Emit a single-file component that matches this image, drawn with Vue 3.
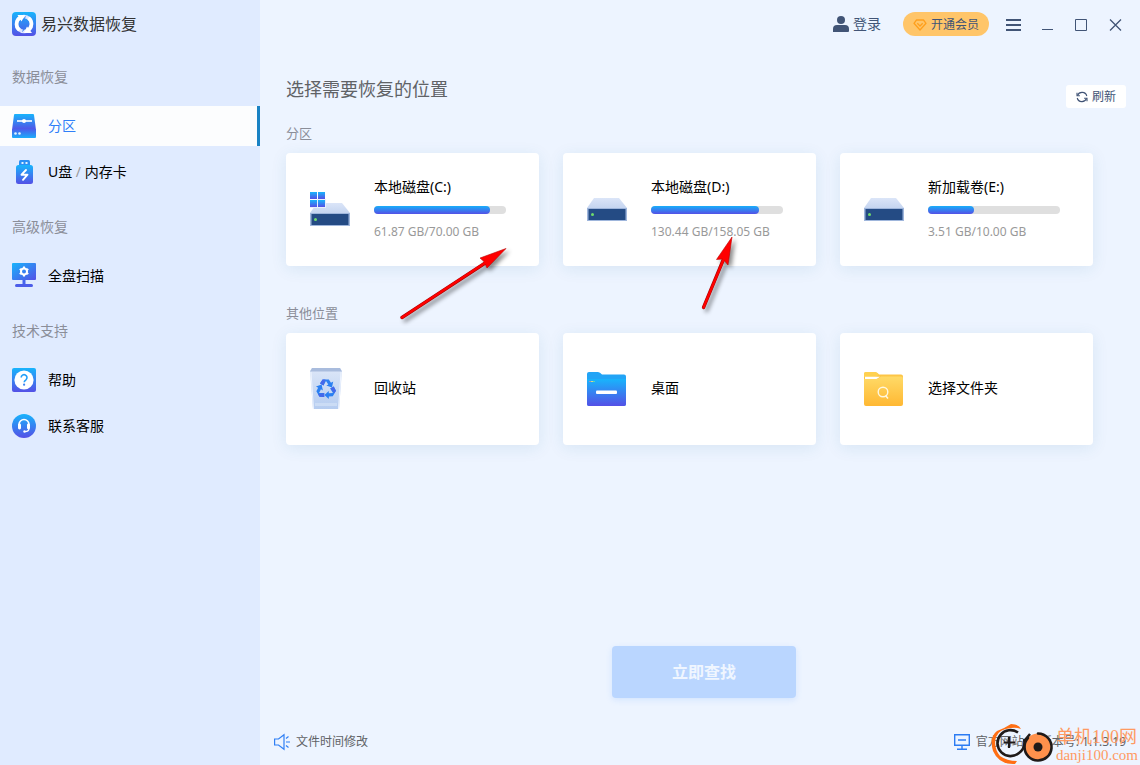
<script setup>
const groups = [
  {
    title: '数据恢复',
    items: [
      { icon: 'disk', label: '分区', active: true },
      { icon: 'usb', label: 'U盘', extra: '内存卡' },
    ],
  },
  { title: '高级恢复', items: [{ icon: 'scan', label: '全盘扫描' }] },
  {
    title: '技术支持',
    items: [
      { icon: 'help', label: '帮助' },
      { icon: 'service', label: '联系客服' },
    ],
  },
]

const drives = [
  { name: '本地磁盘(C:)', size: '61.87 GB/70.00 GB', used: 88, system: true },
  { name: '本地磁盘(D:)', size: '130.44 GB/158.05 GB', used: 82 },
  { name: '新加载卷(E:)', size: '3.51 GB/10.00 GB', used: 35 },
]

const places = [
  { name: '回收站', icon: 'bin' },
  { name: '桌面', icon: 'desktop' },
  { name: '选择文件夹', icon: 'folder' },
]
</script>

<template>
  <div class="app">
    <svg class="defs" width="0" height="0" aria-hidden="true">
      <defs>
        <linearGradient id="blue" x1="0" y1="0" x2="0" y2="1">
          <stop offset="0" stop-color="#18b4fc" />
          <stop offset="1" stop-color="#5450e6" />
        </linearGradient>
        <linearGradient id="blueDiag" x1="0" y1="0" x2="1" y2="1">
          <stop offset="0" stop-color="#18b4fc" />
          <stop offset="1" stop-color="#5450e6" />
        </linearGradient>
        <linearGradient id="blueFlip" x1="0" y1="0" x2="0" y2="1">
          <stop offset="0" stop-color="#4b5ceb" />
          <stop offset="1" stop-color="#1caefb" />
        </linearGradient>
        <linearGradient id="lid" x1="0" y1="0" x2="0" y2="1">
          <stop offset="0" stop-color="#dbe5f8" />
          <stop offset="1" stop-color="#a9c0e6" />
        </linearGradient>
        <linearGradient id="pail" x1="0" y1="0" x2="0" y2="1">
          <stop offset="0" stop-color="#dde7f8" />
          <stop offset="1" stop-color="#b5ccf0" />
        </linearGradient>
        <linearGradient id="gold" x1="0" y1="0" x2="0" y2="1">
          <stop offset="0" stop-color="#ffda67" />
          <stop offset="1" stop-color="#ffb833" />
        </linearGradient>
      </defs>
    </svg>

    <aside class="sidebar">
      <div class="brand">
        <svg width="24" height="24" viewBox="0 0 24 24" aria-hidden="true">
          <rect width="24" height="24" rx="4" fill="url(#blue)" />
          <circle cx="12" cy="12" r="7.500" fill="none" stroke="#dfe6ff" stroke-width="3.400" />
          <path d="M9.500 5A7.500 7.500 0 0 0 7.500 18M14.500 19A7.500 7.500 0 0 0 16.500 6" fill="none" stroke="#fff" stroke-width="3.600" />
          <path d="M13.500 4.500 10 10M10.500 19.500 14 14" stroke="#2f80f2" stroke-width="1" />
          <path d="M5.500 3H13L9.500 9.500z" fill="#fff" />
          <path d="M20 21H12L15 14.500z" fill="#fff" />
        </svg>
        <span>易兴数据恢复</span>
      </div>

      <nav>
        <section v-for="g in groups" :key="g.title" class="group">
          <h2>{{ g.title }}</h2>
          <ul>
            <li v-for="i in g.items" :key="i.label">
              <a href="#" :class="['item', { active: i.active }]">
                <svg width="24" height="24" viewBox="0 0 24 24" aria-hidden="true">
                  <g v-if="i.icon === 'disk'">
                    <path d="M3 0h18a1 1 0 0 1 1 1l2 15H0L2 1a1 1 0 0 1 1-1z" fill="url(#blue)" />
                    <path d="M0 15h24v8a1 1 0 0 1-1 1H1a1 1 0 0 1-1-1z" fill="url(#blueFlip)" />
                    <path d="M5 7h15" stroke="#fff" stroke-width="1.600" />
                    <circle cx="12" cy="7" r="2" fill="#fff" />
                    <circle cx="3.500" cy="19.500" r="1.300" fill="#e2f4ff" />
                    <circle cx="7.500" cy="19.500" r="1.300" fill="#e2f4ff" />
                  </g>
                  <g v-else-if="i.icon === 'usb'">
                    <path d="M8.500 0h8a1.500 1.500 0 0 1 1.500 1.500V6H7V1.500A1.500 1.500 0 0 1 8.500 0z" fill="#2b8ff4" />
                    <rect x="9.500" y="2" width="2" height="2" fill="#e0f2ff" />
                    <rect x="13.500" y="2" width="2" height="2" fill="#e0f2ff" />
                    <rect x="4" y="5" width="17" height="19" rx="2.500" fill="url(#blue)" />
                    <path d="M14 10l-4.500 4.700h6L11 19.800" fill="none" stroke="#fff" stroke-width="1.900" stroke-linecap="round" stroke-linejoin="round" />
                  </g>
                  <g v-else-if="i.icon === 'scan'">
                    <rect y="-1" width="24" height="17" rx="1" fill="url(#blueDiag)" />
                    <path d="M10.500 16h3v4h-3z" fill="#4665ee" />
                    <rect x="3" y="20" width="18" height="3" rx="1.500" fill="#4c5de9" />
                    <circle cx="12" cy="7.500" r="3" fill="none" stroke="#fff" stroke-width="2" />
                    <path d="M12 2.500v2M12 10.500v2M7.700 5l1.700 1M14.600 9l1.700 1M7.700 10l1.700-1M14.600 6l1.700-1" stroke="#fff" stroke-width="2" />
                  </g>
                  <g v-else-if="i.icon === 'help'">
                    <rect width="24" height="24" rx="2" fill="url(#blue)" />
                    <circle cx="12" cy="12" r="9.600" fill="#fff" />
                    <path d="M9.200 9.600a2.900 2.900 0 1 1 4.700 2.200c-1.200.9-1.700 1.300-1.700 2.500" fill="none" stroke="#229ff8" stroke-width="1.600" />
                    <circle cx="12.100" cy="16.700" r="1.100" fill="#3d83f2" />
                  </g>
                  <g v-else>
                    <circle cx="12" cy="12" r="12" fill="url(#blue)" />
                    <path d="M7 13v-2.500a5 5 0 0 1 10 0V13" fill="none" stroke="#fff" stroke-width="1.500" />
                    <rect x="6" y="9.500" width="3" height="6" rx="1.400" fill="#fff" />
                    <rect x="15" y="9.500" width="3" height="6" rx="1.400" fill="#fff" />
                    <path d="M17 14.500c0 2-1.500 3-4 3.200" fill="none" stroke="#fff" stroke-width="1.300" />
                    <circle cx="12.500" cy="17.500" r="1.200" fill="#fff" />
                  </g>
                </svg>
                <span>{{ i.label }}<template v-if="i.extra"><i> / </i>{{ i.extra }}</template></span>
              </a>
            </li>
          </ul>
        </section>
      </nav>
    </aside>

    <main class="main">
      <header class="titlebar">
        <button class="login" type="button">
          <svg width="16" height="16" viewBox="0 0 16 16" fill="#415476" aria-hidden="true">
            <circle cx="8" cy="4" r="4" />
            <path d="M0 16v-3a4 4 0 0 1 4-4h8a4 4 0 0 1 4 4v2a1 1 0 0 1-1 1z" />
          </svg>
          登录
        </button>
        <button class="vip" type="button">
          <svg width="14" height="12" viewBox="0 0 14 12" fill="none" stroke="#ff9f1c" stroke-width="1.300" stroke-linejoin="round" aria-hidden="true">
            <path d="M3.500 1h7L13 4.300 7 11 1 4.300z" />
            <path d="M4.300 4.300 7 7l2.700-2.700" />
          </svg>
          开通会员
        </button>
        <div class="window-buttons">
          <button type="button" aria-label="菜单">
            <svg width="16" height="12" viewBox="0 0 16 12" stroke="#415476" stroke-width="2"><path d="M0 1h15M0 6h15M0 11h15" /></svg>
          </button>
          <button type="button" aria-label="最小化">
            <svg width="12" height="12" viewBox="0 0 12 12" stroke="#415476"><path d="M0 10.500h11" /></svg>
          </button>
          <button type="button" aria-label="最大化">
            <svg width="12" height="12" viewBox="0 0 12 12" fill="none" stroke="#415476"><path d="M-.5.500h11v11H-.5z" /></svg>
          </button>
          <button type="button" aria-label="关闭">
            <svg width="12" height="12" viewBox="0 0 12 12" stroke="#415476" stroke-width="1.300"><path d="M0 .500l11 11M11 .500l-11 11" /></svg>
          </button>
        </div>
      </header>

      <div class="heading">
        <h1>选择需要恢复的位置</h1>
        <button class="refresh" type="button">
          <svg width="12" height="12" viewBox="0 0 12 12" fill="none" stroke="#415476" stroke-width="1.100" aria-hidden="true">
            <path d="M1.500 4.500A4.900 4.900 0 0 1 10.800 5M10.500 7.500A4.900 4.900 0 0 1 1.200 7" />
            <path d="M1 1.800v2.900h2.900M11 10.200V7.300H8.100" />
          </svg>
          刷新
        </button>
      </div>

      <section class="block">
        <h3>分区</h3>
        <ul class="cards">
          <li v-for="(d, n) in drives" :key="d.name">
            <button class="card drive" type="button">
              <span class="pic">
                <svg width="40" :height="d.system ? 36 : 24" :viewBox="d.system ? '0 -11 40 36' : '0 0 40 24'" aria-hidden="true">
                  <path d="M7 0h25l8 10v13H0V10z" fill="url(#lid)" />
                  <path d="M0 10h40v13H0z" fill="#9fb6dc" />
                  <path d="M1.500 11h37v11h-37z" fill="#244b84" />
                  <circle cx="5.500" cy="16.500" r="1.500" fill="#6fdc6c" />
                  <g v-if="d.system">
                    <path d="M7-4h9v9H0V4h7z" fill="#e8effb" />
                    <path d="M0-11h7v7H0zM8-11h7v7H8z" fill="url(#blue)" />
                    <path d="M0-3h7v7H0zM8-3h7v7H8z" fill="url(#blue)" />
                  </g>
                </svg>
              </span>
              <span class="info">
                <span class="name">{{ d.name }}</span>
                <span class="bar"><span class="fill" :style="{ width: d.used + '%' }"></span></span>
                <span class="size">{{ d.size }}</span>
              </span>
            </button>
            <svg v-if="n === 0" class="arrow first" width="120" height="84" viewBox="0 0 120 84" aria-hidden="true">
              <path d="M6 74.500 90 19.500" fill="none" stroke="#a00" stroke-width="3.300" stroke-linecap="round" />
              <path d="M110 5.500 84 15 88 18.500 91 25z" fill="#f00" stroke="#b00" stroke-width="0.600" />
              <path d="M6 74.500 92 18" fill="none" stroke="#f00" stroke-width="2.300" stroke-linecap="round" />
            </svg>
            <svg v-if="n === 1" class="arrow second" width="50" height="84" viewBox="0 0 50 84" aria-hidden="true">
              <path d="M7.500 74.500 28 25" fill="none" stroke="#a00" stroke-width="3.300" stroke-linecap="round" />
              <path d="M36 4 20.500 26.500 27 26 32 32z" fill="#f00" stroke="#b00" stroke-width="0.600" />
              <path d="M7.500 74.500 29 23" fill="none" stroke="#f00" stroke-width="2.300" stroke-linecap="round" />
            </svg>
          </li>
        </ul>
      </section>

      <section class="block other">
        <h3>其他位置</h3>
        <ul class="cards">
          <li v-for="p in places" :key="p.name">
            <button class="card place" type="button">
              <span class="pic">
                <svg v-if="p.icon === 'bin'" width="32" height="42" viewBox="0 0 32 42" aria-hidden="true">
                  <path d="M2 0h28l2 3-3 38H3L0 3z" fill="url(#pail)" />
                  <path d="M2 0h28l2 3.500H0z" fill="#a9bcdd" />
                  <path d="M1 4 3.500 41M31 4 28.500 41" stroke="#eef4ff" stroke-width="1" />
                  <path d="M5 35h22v3H5z" fill="#cbdcf5" />
                  <g fill="#2b80f2" transform="translate(16 21)">
                    <g v-for="a in [0, 120, 240]" :key="a" :transform="`rotate(${a})`">
                      <path d="M-6-5.500-3.400-9.500H2.800L5-6.200 7.200-7.400 6-1.600.3-3.400 2.300-4.500 0-8-2.500-3.500z" />
                      <path d="M-6-5.500-3.400-9.500H-.5L-2.500-3.500z" fill="#4568ea" />
                    </g>
                  </g>
                </svg>
                <svg v-else-if="p.icon === 'desktop'" width="39" height="34" viewBox="0 0 39 34" aria-hidden="true">
                  <path d="M2 0h9q2 0 4 2.500H37a2 2 0 0 1 2 2V32a2 2 0 0 1-2 2H2a2 2 0 0 1-2-2V2a2 2 0 0 1 2-2z" fill="#22a4f6" />
                  <path d="M0 7h39v25a2 2 0 0 1-2 2H2a2 2 0 0 1-2-2z" fill="url(#blue)" />
                  <path d="M2 9.500h2" stroke="#a88fb7" /><path d="M4 9.500h2" stroke="#d3d78f" /><path d="M6 9.500h2" stroke="#5dd8ac" />
                  <rect x="9" y="18.500" width="21" height="3.500" rx="1" fill="#fff" />
                </svg>
                <svg v-else width="39" height="34" viewBox="0 0 39 34" aria-hidden="true">
                  <path d="M2 0h9q2 0 4 2.500H37a2 2 0 0 1 2 2V20H0V2a2 2 0 0 1 2-2z" fill="#fdc546" />
                  <path d="M2 0h9q2 0 4 2.500l-3 2.500H0V2a2 2 0 0 1 2-2z" fill="#ffd150" />
                  <path d="M1 4.800h15L12 7.500H1z" fill="#fff" />
                  <path d="M0 7h12q2 0 5-2.500h20a2 2 0 0 1 2 2V32a2 2 0 0 1-2 2H2a2 2 0 0 1-2-2z" fill="url(#gold)" />
                  <circle cx="19" cy="20" r="4.800" fill="none" stroke="#fff7df" stroke-width="1.400" />
                  <path d="M21.500 23.500 24 26.500" stroke="#fff7df" stroke-width="1.500" />
                </svg>
              </span>
              <span class="name">{{ p.name }}</span>
            </button>
          </li>
        </ul>
      </section>

      <div class="action">
        <button type="button" disabled>立即查找</button>
      </div>

      <footer class="footer">
        <a href="#">
          <svg width="16" height="16" viewBox="0 0 16 16" fill="none" stroke="#2f7ff5" stroke-width="1.200" aria-hidden="true">
            <path d="M.6 5h3.900L10 .8v14.400L4.500 11H.6z" />
            <path d="M12 4.500 14.500 2.500M12 8h4M12 11.500l2.500 2" />
          </svg>
          文件时间修改
        </a>
        <div class="about">
          <a href="#">
            <svg width="16" height="16" viewBox="0 0 16 16" fill="none" stroke="#2b7bf3" stroke-width="1.400" aria-hidden="true">
              <path d="M.700.700h14.600v10.600H.700zM4 6h8M8 11.300v4M3 15.300h10" />
            </svg>
            官方网站
          </a>
          <span>版本号: 1.1.3.19</span>
        </div>
      </footer>
    </main>

    <div class="watermark">
      <svg width="64" height="42" viewBox="0 0 64 42" fill="none" aria-hidden="true">
        <path d="M20 1Q28 1 30 6Q25 4 20 5Q8 6 5 14Q2 24 9 33Q16 38 26 38L24 41Q8 42 2 28Q-2 14 6 8Q14 5 20 1z" fill="#ff6f14" />
        <path d="M27 9.500A13 13 0 1 0 28 30Q35 25 33 16" stroke="#1f1a19" stroke-width="2.600" />
        <path d="M18 14v11M13 19.500h11" stroke="#1f1a19" stroke-width="2.200" />
        <circle cx="47" cy="24" r="13.500" fill="#ff914c" />
        <path d="M47 10.500q6 0 10.500 5A13.500 13.500 0 1 1 37 15" stroke="#1f1a19" stroke-width="2.600" stroke-linecap="round" />
        <circle cx="47" cy="24" r="4.500" fill="#1f1a19" />
        <path d="M34 17 39 11" stroke="#1f1a19" stroke-width="2.500" />
      </svg>
      <div class="mark-text">
        <span class="mark-name">单机100网</span>
        <span class="mark-site">danji100.com</span>
      </div>
    </div>
  </div>
</template>

<style>
body {
  margin: 0;
}
</style>

<style scoped>
.app {
  position: relative;
  display: flex;
  min-height: 100vh;
  background: #edf4ff;
  color: #000;
  font: 14px/20px "Noto Sans", "Noto Sans CJK SC", sans-serif;
}
.app * {
  box-sizing: border-box;
}
.defs {
  position: absolute;
}
svg {
  flex: none;
  display: block;
  overflow: visible;
}
h1, h2, h3, ul {
  margin: 0;
  padding: 0;
  font-weight: 400;
  list-style: none;
}
a {
  color: inherit;
  text-decoration: none;
}
button {
  margin: 0;
  padding: 0;
  border: 0;
  background: none;
  color: inherit;
  font: inherit;
  text-align: left;
}

.sidebar {
  flex: none;
  width: 260px;
  background: #e0ebff;
}
.brand {
  display: flex;
  align-items: center;
  gap: 5px;
  height: 48px;
  padding-left: 12px;
  color: #333;
  font-size: 16px;
}
.group {
  padding-top: 19px;
}
.group + .group {
  padding-top: 25px;
}
.group h2 {
  padding-left: 12px;
  margin-bottom: 19px;
  color: #8b8e99;
  font-size: 14px;
}
.group ul {
  display: grid;
  gap: 6px;
}
.item {
  display: flex;
  align-items: center;
  gap: 12px;
  height: 40px;
  padding-left: 12px;
  border-right: 3px solid transparent;
}
.item i {
  color: #999;
  font-style: normal;
}
.item.active {
  background: #fcfdfe;
  border-color: #1a83c4;
  color: #2f7ff8;
}

.main {
  flex: 1;
  min-width: 0;
  display: flex;
  flex-direction: column;
}
.titlebar {
  display: flex;
  align-items: center;
  justify-content: flex-end;
  height: 48px;
  padding-right: 7px;
  color: #415476;
}
.login {
  display: flex;
  align-items: center;
  gap: 4px;
  margin-right: 22px;
}
.vip {
  display: flex;
  align-items: center;
  gap: 4px;
  height: 24px;
  padding: 1px 10px 0;
  border-radius: 12px;
  background: #ffc569;
  font-size: 12px;
}
.window-buttons {
  display: flex;
  margin-left: 8px;
}
.window-buttons button {
  display: flex;
  align-items: center;
  justify-content: center;
  width: 34px;
  height: 34px;
  padding-top: 1px;
}
.heading {
  display: flex;
  justify-content: space-between;
  margin-top: 29px;
  padding: 0 14px 0 26px;
}
.heading h1 {
  color: #606266;
  font-size: 18px;
  line-height: 24px;
}
.refresh {
  display: flex;
  align-items: center;
  gap: 4px;
  height: 23px;
  margin-top: 8px;
  padding: 0 10px;
  border-radius: 3px;
  background: #fff;
  color: #415476;
  font-size: 12px;
}
.block {
  padding: 15px 47px 0 26px;
}
.block.other {
  padding-top: 37px;
}
.block h3 {
  margin-bottom: 10px;
  color: #8b8e99;
  font-size: 13px;
}
.cards {
  display: grid;
  grid-template-columns: repeat(3, minmax(0, 1fr));
  gap: 24px;
}
.cards li {
  position: relative;
}
.card {
  display: flex;
  align-items: center;
  width: 100%;
  padding: 24px;
  border-radius: 4px;
  background: #fff;
  box-shadow: 0 3px 16px rgba(30, 110, 150, 0.1);
}
.drive {
  min-height: 113px;
}
.place {
  min-height: 112px;
}
.place .name {
  padding-bottom: 2px;
}
.pic {
  flex: none;
  width: 64px;
}
.info {
  flex: 1;
  max-width: 132px;
}
.info > span {
  display: block;
}
.bar {
  height: 8px;
  margin: 9px 0 8px;
  border-radius: 4px;
  background: #dfdfdf;
}
.fill {
  display: block;
  height: 100%;
  border-radius: 4px;
  background: linear-gradient(#18aefa, #5450e6);
}
.size {
  color: #999;
  font-size: 12px;
}
.arrow {
  position: absolute;
  z-index: 1;
  pointer-events: none;
  filter: drop-shadow(3px 3px 2px rgba(0, 0, 0, 0.45));
}
.first {
  left: 110px;
  top: 90px;
}
.second {
  left: 133px;
  top: 80px;
}

.action {
  flex: 1;
  display: flex;
  align-items: flex-end;
  justify-content: center;
  padding: 40px 0 19px 8px;
}
.action button {
  width: 184px;
  height: 52px;
  border-radius: 4px;
  background: #bad6ff;
  box-shadow: 0 2px 6px rgba(110, 170, 250, 0.2);
  color: #f0f6ff;
  font-size: 16px;
  font-weight: 700;
  text-align: center;
}
.footer {
  display: flex;
  align-items: center;
  justify-content: space-between;
  height: 48px;
  padding: 1px 14px 0;
  color: #606266;
  font-size: 12px;
}
.footer a {
  display: flex;
  align-items: center;
  gap: 6px;
}
.about {
  display: flex;
  gap: 16px;
}
.watermark {
  position: absolute;
  right: 2px;
  bottom: 0;
  display: flex;
  align-items: center;
  gap: 1px;
  color: #ff9a62;
  pointer-events: none;
}
.mark-text {
  display: grid;
  padding-top: 2px;
}
.mark-name {
  font-family: "Liberation Serif", "Noto Sans CJK SC", serif;
  font-size: 18px;
}
.mark-site {
  font-family: "Liberation Serif", serif;
  font-size: 15px;
  line-height: 16px;
}
</style>
